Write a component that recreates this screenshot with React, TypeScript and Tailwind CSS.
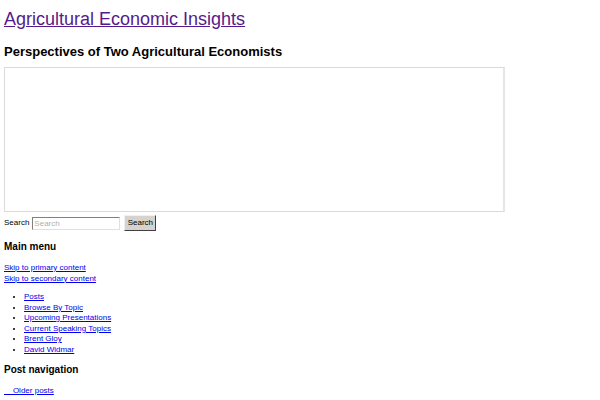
const menu = [
  "Posts",
  "Browse By Topic",
  "Upcoming Presentations",
  "Current Speaking Topics",
  "Brent Gloy",
  "David Widmar",
];

function App() {
  return (
    <div className="min-h-screen bg-white px-[4px] text-[8px] leading-[10.5px] text-black font-['Liberation_Sans',Arial,sans-serif]">
      <header>
        <h1 className="pt-[9px] text-[18px] leading-[21px]">
          <a href="#" className="text-[#551a8b] underline">
            Agricultural Economic Insights
          </a>
        </h1>
        <h2 className="mt-[14px] text-[13px] leading-[15px] font-bold">
          Perspectives of Two Agricultural Economists
        </h2>
      </header>

      <div className="mt-[8px] h-[145px] w-[501px] border border-[#dadada] border-r-2 border-r-[#e6e6e6]"></div>

      <form className="mt-[3px] flex items-center h-[16px]">
        <label className="mr-[3px]">Search</label>
        <input
          placeholder="Search"
          className="h-[13px] w-[88px] border border-t-[#808080] border-l-[#808080] border-r-[#e0e0e0] border-b-[#e0e0e0] px-[1px] text-[8px] placeholder:text-[#b0b0b0]"
        />
        <button
          type="button"
          className="ml-[4px] h-[16px] w-[32px] border border-t-[#f0f0f0] border-l-[#f0f0f0] border-r-[#404040] border-b-[#404040] bg-[#d6d3ce] text-[8px] leading-[12px]"
        >
          Search
        </button>
      </form>

      <nav>
        <h3 className="mt-[10px] text-[10px] leading-[12px] font-bold">Main menu</h3>
        <div className="mt-[10px]">
          <a href="#" className="block text-[#0000ee] underline">
            Skip to primary content
          </a>
          <a href="#" className="block text-[#0000ee] underline">
            Skip to secondary content
          </a>
        </div>
        <ul className="mt-[8px] list-disc pl-[20px]">
          {menu.map((m) => (
            <li key={m}>
              <a href="#" className="text-[#0000ee] underline">
                {m}
              </a>
            </li>
          ))}
        </ul>
      </nav>

      <h3 className="mt-[9px] text-[10px] leading-[12px] font-bold">Post navigation</h3>
      <div className="mt-[10px]">
        <a href="#" className="text-[#0000ee] underline">
          {"\u00a0\u00a0\u00a0 Older posts"}
        </a>
      </div>
    </div>
  );
}

export default App;
